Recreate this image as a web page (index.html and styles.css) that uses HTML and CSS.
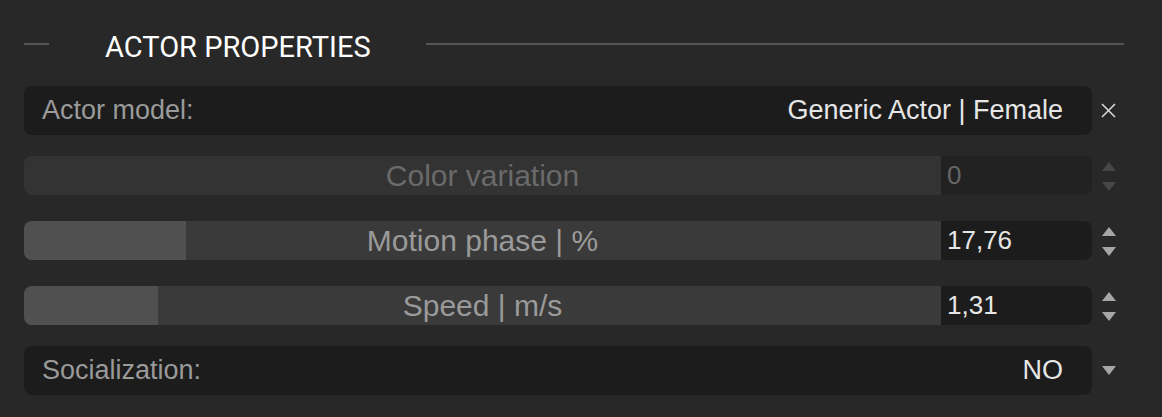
FILE: index.html
```html
<!DOCTYPE html>
<html>
<head>
<meta charset="utf-8">
<link rel="stylesheet" href="styles.css">
</head>
<body>
<div class="panel">
  <div class="header">
    <span class="rule rule-short"></span>
    <h2 class="title">ACTOR PROPERTIES</h2>
    <span class="rule rule-long"></span>
  </div>

  <div class="row row-tall">
    <div class="field select">
      <span class="label">Actor model:</span>
      <span class="value">Generic Actor | Female</span>
    </div>
    <div class="side">
      <svg class="icon-x" width="15" height="15" viewBox="0 0 15 15"><path d="M1 1 L14 14 M14 1 L1 14" stroke="#dcdcdc" stroke-width="1.5" fill="none"/></svg>
    </div>
  </div>

  <div class="row row-slider gap-a disabled">
    <div class="slider">
      <div class="bar"><span class="bar-label">Color variation</span></div>
      <div class="num">0</div>
    </div>
    <div class="side spin">
      <svg width="14" height="9" viewBox="0 0 14 9"><path d="M7 0 L14 9 L0 9 Z"/></svg>
      <svg width="14" height="9" viewBox="0 0 14 9"><path d="M0 0 L14 0 L7 9 Z"/></svg>
    </div>
  </div>

  <div class="row row-slider gap-b">
    <div class="slider">
      <div class="bar"><div class="fill" style="width:17.7%"></div><span class="bar-label">Motion phase | %</span></div>
      <div class="num">17,76</div>
    </div>
    <div class="side spin">
      <svg width="14" height="9" viewBox="0 0 14 9"><path d="M7 0 L14 9 L0 9 Z"/></svg>
      <svg width="14" height="9" viewBox="0 0 14 9"><path d="M0 0 L14 0 L7 9 Z"/></svg>
    </div>
  </div>

  <div class="row row-slider gap-b">
    <div class="slider">
      <div class="bar"><div class="fill" style="width:14.6%"></div><span class="bar-label">Speed | m/s</span></div>
      <div class="num">1,31</div>
    </div>
    <div class="side spin">
      <svg width="14" height="9" viewBox="0 0 14 9"><path d="M7 0 L14 9 L0 9 Z"/></svg>
      <svg width="14" height="9" viewBox="0 0 14 9"><path d="M0 0 L14 0 L7 9 Z"/></svg>
    </div>
  </div>

  <div class="row row-tall gap-a">
    <div class="field select">
      <span class="label">Socialization:</span>
      <span class="value">NO</span>
    </div>
    <div class="side drop">
      <svg width="14" height="9" viewBox="0 0 14 9"><path d="M0 0 L14 0 L7 9 Z"/></svg>
    </div>
  </div>
</div>
</body>
</html>
```

FILE: styles.css
```css
html, body {
  margin: 0;
  padding: 0;
  background: #282828;
}
body {
  width: 1162px;
  height: 417px;
  overflow: hidden;
  font-family: "Liberation Sans", Arial, sans-serif;
}
.panel {
  padding: 24px 38px 0 24px;
}
.header {
  display: flex;
  align-items: center;
  height: 40px;
  margin-bottom: 22px;
}
.rule {
  height: 2px;
  background: #555555;
}
.rule-short {
  width: 25px;
}
.rule-long {
  flex: 1;
}
.title {
  margin: 0 55px 0 56px;
  font-family: Roboto, "Liberation Sans", sans-serif;
  font-weight: 400;
  font-size: 29px;
  color: #ffffff;
  line-height: 40px;
  position: relative;
  top: 3px;
}
.row {
  display: flex;
  align-items: stretch;
}
.row-tall {
  height: 49px;
}
.row-slider {
  height: 39px;
}
.gap-a {
  margin-top: 21px;
}
.gap-b {
  margin-top: 26px;
}
.field {
  flex: 1;
  display: flex;
  align-items: center;
  justify-content: space-between;
  background: #1c1c1c;
  border-radius: 8px;
  padding: 0 29px 0 18px;
  font-size: 27px;
}
.label {
  color: #9a9a9a;
}
.value {
  color: #e6e6e6;
}
.side {
  width: 31px;
  display: flex;
  align-items: center;
  justify-content: center;
  padding-left: 1px;
}
.spin {
  flex-direction: column;
  gap: 11px;
  padding-top: 2px;
}
.spin svg, .drop svg {
  fill: #a6a6a6;
  display: block;
}
.slider {
  flex: 1;
  display: flex;
}
.bar {
  flex: 1;
  position: relative;
  background: #3a3a3a;
  border-radius: 8px 0 0 8px;
  overflow: hidden;
  display: flex;
  align-items: center;
  justify-content: center;
  font-size: 30px;
}
.fill {
  position: absolute;
  left: 0;
  top: 0;
  bottom: 0;
  background: #505050;
}
.bar-label {
  position: relative;
  color: #9a9a9a;
}
.num {
  width: 145px;
  background: #1c1c1c;
  border-radius: 0 8px 8px 0;
  display: flex;
  align-items: center;
  padding-left: 6px;
  font-size: 26px;
  color: #e6e6e6;
}
.disabled .bar {
  background: #333333;
}
.disabled .bar-label {
  color: #6a6a6a;
}
.disabled .num {
  background: #222222;
  color: #666666;
}
.disabled .spin svg {
  fill: #474747;
}
```
